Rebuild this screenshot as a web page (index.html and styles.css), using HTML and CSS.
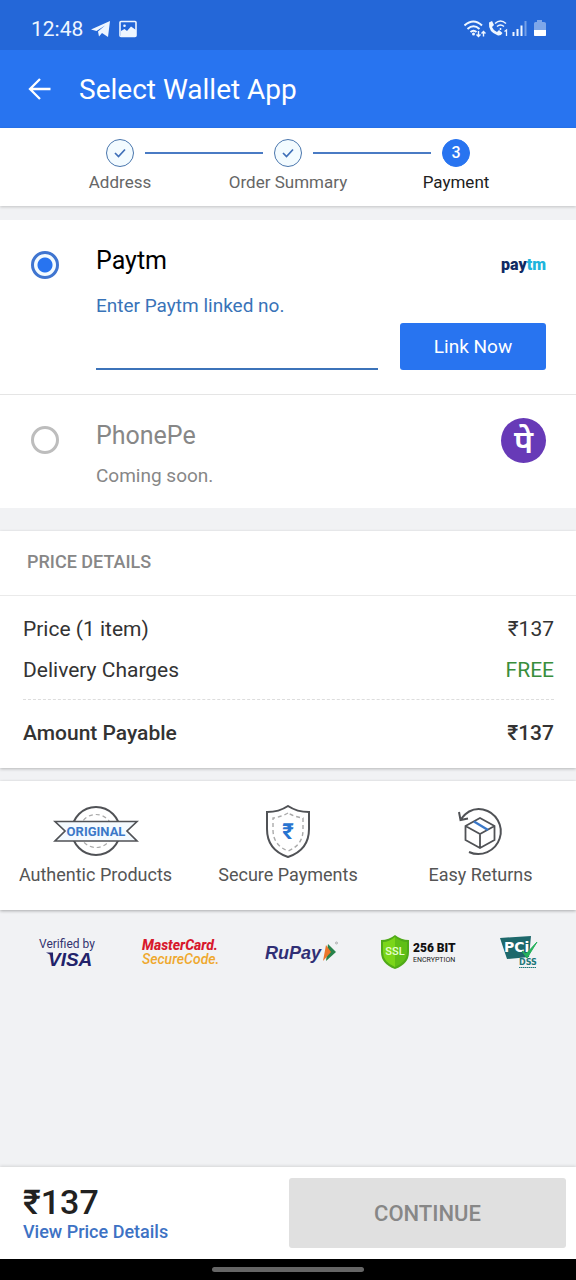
FILE: index.html
```html
<!DOCTYPE html>
<html lang="en">
<head>
    <meta charset="UTF-8">
    <meta name="viewport" content="width=device-width, initial-scale=1.0">
    <title>Select Wallet App</title>
    <link rel="stylesheet" href="styles.css">
</head>
<body>
    <div class="status-bar">
        <span class="status-time">12:48</span>
        <svg class="status-telegram" width="20" height="18" viewBox="0 0 20 18"><path d="M0 9.500 19 1 17 17 11 13 8 16.500 7 11.500 14 5.500 5.500 11Z" fill="#eef6ff"/></svg>
        <svg class="status-picture" width="18" height="18" viewBox="0 0 18 18"><rect x="1" y="1.500" width="16" height="15" rx="1" fill="none" stroke="#eef6ff" stroke-width="1.600"/><circle cx="5.500" cy="5.800" r="1.300" fill="#eef6ff"/><path d="M2 11 5.500 9 8 11 12 6.500 17 10V16H2Z" fill="#eef6ff"/></svg>
        <svg class="status-signals" width="84" height="22" viewBox="0 0 84 22" fill="none" stroke="#eef6ff" stroke-width="2">
            <path d="M.5 7.500Q9.500-.5 18 7.500M3.500 11Q9.500 5.500 15.500 11M6.500 14Q9.500 11.500 12.500 14"/>
            <circle cx="9.500" cy="16" r="1.500" fill="#eef6ff" stroke="none"/>
            <path d="M14.500 13v5M12.500 16.500l2 2 2-2M19.500 18.500v-5M17.500 15.500l2-2 2 2" stroke-width="1.400"/>
            <path d="M25 4.500 28 3 30 7 28 9Q29 12 33 14L35 12 38.500 15Q37 18 34 17.500 24 14 25 4.500Z" fill="#eef6ff" stroke="none"/>
            <path d="M31 5.500Q36.500.5 42 5.500M33 8.500Q36.500 5.500 40 8.500M36.500 10v2" stroke-width="1.500"/>
            <path d="M40.500 13.500 42.500 12V18" stroke-width="1.300"/>
            <path d="M49.500 18v-4M53.500 18v-7M57.500 18V7.500"/>
            <path d="M61.500 18V3" opacity=".4"/>
            <path d="M70 18V5.500Q70 4 71.500 4H73V2H78V4H80Q82 4 82 5.500V18Z" fill="#eef6ff" stroke="none" opacity=".45"/>
            <path d="M70 12H82V17Q82 18 81 18H71Q70 18 70 17Z" fill="#fff" stroke="none"/>
        </svg>
    </div>

    <header class="app-bar">
        <button class="back-button" type="button" aria-label="Back">
            <svg width="24" height="24" viewBox="0 0 24 24" fill="none" stroke="#fff" stroke-width="2.300"><path d="M22.500 12H2M12 2 2 12 12 22"/></svg>
        </button>
        <h1 class="app-title">Select Wallet App</h1>
    </header>

    <ol class="stepper">
        <li class="step">
            <div class="step-track">
                <span class="step-circle"><svg width="14" height="12" viewBox="0 0 14 12"><path d="M2 6 5.500 9.500 12 2.500" fill="none" stroke="#3f6fb8" stroke-width="1.700"/></svg></span>
            </div>
            Address
        </li>
        <li class="step">
            <div class="step-track">
                <span class="step-circle"><svg width="14" height="12" viewBox="0 0 14 12"><path d="M2 6 5.500 9.500 12 2.500" fill="none" stroke="#3f6fb8" stroke-width="1.700"/></svg></span>
            </div>
            Order Summary
        </li>
        <li class="step step-current">
            <div class="step-track"><span class="step-circle">3</span></div>
            Payment
        </li>
    </ol>

    <main class="content">
        <form class="wallets">
            <div class="wallet">
                <input class="wallet-radio" type="radio" name="wallet" id="paytm" checked>
                <div class="wallet-body">
                    <div class="wallet-head">
                        <label class="wallet-name" for="paytm">Paytm</label>
                        <span class="paytm-logo">pay<span class="paytm-logo-tm">tm</span></span>
                    </div>
                    <label class="phone-label" for="phone">Enter Paytm linked no.</label>
                    <div class="link-row">
                        <input class="phone-input" type="tel" id="phone">
                        <button class="link-button" type="button">Link Now</button>
                    </div>
                </div>
            </div>
            <div class="wallet wallet-disabled">
                <input class="wallet-radio" type="radio" name="wallet" id="phonepe" disabled>
                <div class="wallet-body">
                    <div class="wallet-head">
                        <label class="wallet-name" for="phonepe">PhonePe</label>
                        <span class="phonepe-logo">पे</span>
                    </div>
                    <p class="wallet-note">Coming soon.</p>
                </div>
            </div>
        </form>

        <section class="price-card">
            <h2 class="price-title">PRICE DETAILS</h2>
            <dl class="price-list">
                <div class="price-row"><dt>Price (1 item)</dt><dd>₹137</dd></div>
                <div class="price-row"><dt>Delivery Charges</dt><dd class="free">FREE</dd></div>
                <div class="price-row price-total"><dt>Amount Payable</dt><dd>₹137</dd></div>
            </dl>
        </section>

        <section class="trust">
            <div class="trust-item">
                <svg width="86" height="54" viewBox="0 0 86 54" fill="none" stroke="#505256" stroke-width="2">
                    <circle cx="43" cy="26" r="24"/>
                    <circle cx="43" cy="26" r="16.500" stroke="#aaa" stroke-width="1.200" stroke-dasharray="4 3"/>
                    <path d="M2 16.500H84L74 26 84 36H2L12 26Z" fill="#f4faff" stroke-width="1.700"/>
                    <text x="43" y="31" class="original-text">ORIGINAL</text>
                </svg>
                Authentic Products
            </div>
            <div class="trust-item">
                <svg width="48" height="54" viewBox="0 0 48 54" fill="none" stroke="#505256" stroke-width="2">
                    <path d="M24 1Q15 7 3 7V24Q3 45 24 52 45 45 45 24V7Q33 7 24 1Z"/>
                    <path d="M24 8Q17 12 9 13V25Q9 40 24 46 39 40 39 25V13Q31 12 24 8Z" stroke="#aaa" stroke-width="1.400" stroke-dasharray="4 3"/>
                    <text x="24" y="34" class="shield-rupee">₹</text>
                </svg>
                Secure Payments
            </div>
            <div class="trust-item">
                <svg width="48" height="54" viewBox="0 0 48 54" fill="none" stroke="#505256" stroke-width="2">
                    <path d="M4 14Q13 2 26 4.500A22.500 22.500 0 1 1 12 47M2 7 3.500 15 11 13.500"/>
                    <path d="M23 13 37.500 21V35L23 43 8.500 35V21ZM8.500 21 23 29 37.500 21M23 29V43" stroke-width="1.800"/>
                    <path d="M17 16.500 31 25" stroke="#3b78c8" stroke-width="2.400"/>
                </svg>
                Easy Returns
            </div>
        </section>

        <div class="badges">
            <svg width="60" height="36" viewBox="0 0 60 36">
                <text x="1" y="13" class="visa-small">Verified by</text>
                <text x="10" y="31" class="visa">VISA</text>
                <path d="M8 17.500H15V22Q12 19 8 17.500Z" fill="#22226a"/>
            </svg>
            <svg width="80" height="36" viewBox="0 0 80 36">
                <text x="1" y="15" class="mastercard">MasterCard.</text>
                <text x="1" y="29" class="securecode">SecureCode.</text>
            </svg>
            <svg width="74" height="36" viewBox="0 0 74 36">
                <text x="1" y="24" class="rupay">RuPay</text>
                <path d="M64 9 72 17 62 26Z" fill="#27824a"/><path d="M62 10 67 17 59 26Z" fill="#ec762b"/>
                <circle cx="72.500" cy="8" r="1" fill="none" stroke="#888" stroke-width=".6"/>
            </svg>
            <svg width="76" height="36" viewBox="0 0 76 36">
                <path d="M14 0Q8 5 0 5V17Q0 29 14 34 28 29 28 17V5Q20 5 14 0Z" fill="#50aa18"/>
                <path d="M14 2Q8 7 2 7V17Q2 27 14 32Z" fill="#7bd61a"/><path d="M14 2Q20 7 26 7V17Q26 27 14 32Z" fill="#60bf16"/>
                <text x="14" y="20" class="ssl">SSL</text>
                <text x="32" y="17" class="ssl-bits">256 BIT</text>
                <text x="32" y="27" class="ssl-note">ENCRYPTION</text>
            </svg>
            <svg width="38" height="36" viewBox="0 0 38 36">
                <path d="M0 3 31 1 29 22 7 24Z" fill="#1d686b"/>
                <text x="4" y="17" class="pci">PCi</text>
                <path d="M22 16 26 19 37 7 27 23Z" fill="#24b15b" stroke="#24b15b"/>
                <text x="19" y="30" class="dss">DSS</text>
                <path d="M19 32.500H36" stroke="#1d7778" stroke-width="1.200" stroke-dasharray="1.500 .5"/>
            </svg>
        </div>
    </main>

    <footer class="checkout-bar">
        <div class="checkout-total">
            <strong class="checkout-price">₹137</strong>
            <a class="checkout-link" href="#">View Price Details</a>
        </div>
        <button class="continue-button" type="button" disabled>CONTINUE</button>
    </footer>
    <div class="nav-bar"><span class="nav-handle"></span></div>
</body>
</html>
```

FILE: styles.css
```css
* {
    box-sizing: border-box;
}

body {
    margin: 0;
    min-height: 100vh;
    display: flex;
    flex-direction: column;
    font-family: Roboto, "Noto Sans", sans-serif;
    background: #f1f2f4;
    color: #333;
}

h1, h2, p, ol, dl, dd {
    margin: 0;
    padding: 0;
}

svg {
    display: block;
    flex-shrink: 0;
}

button, input {
    font-family: inherit;
}

/* top bars */
.status-bar {
    height: 50px;
    padding: 8px 28px 0 31px;
    display: flex;
    align-items: center;
    gap: 8px;
    background: #2467d8;
    color: #eef6ff;
}

.status-time {
    font-size: 21px;
}

.status-signals {
    margin-left: auto;
}

.app-bar {
    height: 78px;
    padding: 0 28px;
    display: flex;
    align-items: center;
    gap: 27px;
    background: #2874f0;
    color: #fff;
}

.back-button {
    padding: 0;
    border: 0;
    background: none;
}

.app-title {
    font-size: 28px;
    font-weight: 400;
}

/* steps */
.stepper {
    height: 78px;
    padding: 11px 36px 0;
    display: grid;
    grid-template-columns: repeat(3, 1fr);
    list-style: none;
    background: #fff;
    box-shadow: 0 1px 3px rgba(0, 0, 0, 0.2);
}

.step {
    text-align: center;
    font-size: 17px;
    line-height: 20px;
    color: #666;
}

.step-track {
    display: flex;
    align-items: center;
    gap: 11px;
    margin-bottom: 5px;
}

.step-track::before,
.step-track::after {
    content: "";
    flex: 1;
    height: 2px;
    background: #4a7bc4;
}

.step:first-child .step-track::before,
.step:last-child .step-track::after {
    background: none;
}

.step-circle {
    width: 28px;
    height: 28px;
    display: flex;
    align-items: center;
    justify-content: center;
    border: 1px solid #4a76ad;
    border-radius: 50%;
    background: #f3fbff;
}

.step-current {
    color: #212121;
}

.step-current .step-circle {
    border-color: #2874f0;
    background: #2874f0;
    color: #fff;
    font-size: 16px;
    font-weight: 500;
}

.content {
    flex: 1;
    padding-top: 14px;
}

/* wallets */
.wallets {
    background: #fff;
    margin-bottom: 23px;
}

.wallet {
    padding: 23px 30px 24px 31px;
    display: flex;
    gap: 37px;
}

.wallet-radio {
    appearance: none;
    flex-shrink: 0;
    width: 28px;
    height: 28px;
    margin: 8px 0 0;
    border: 3px solid #3f75d0;
    border-radius: 50%;
    background: radial-gradient(circle, #2874f0 7px, #f3fbff 8px);
}

.wallet-body {
    flex: 1;
}

.wallet-head {
    display: flex;
    justify-content: space-between;
    align-items: center;
    height: 44px;
    padding-bottom: 10px;
}

.wallet-name {
    font-size: 25px;
    color: #000;
}

.paytm-logo {
    margin-top: 10px;
    font-size: 16px;
    font-weight: 900;
    line-height: 18px;
    color: #102a63;
}

.paytm-logo-tm {
    color: #20b4dc;
}

.phone-label {
    display: block;
    margin-top: 8px;
    font-size: 19px;
    line-height: 22px;
    color: #3973b8;
}

.link-row {
    display: flex;
    align-items: flex-end;
    gap: 22px;
    margin-top: 6px;
}

.phone-input {
    flex: 1;
    min-width: 0;
    height: 40px;
    padding: 0;
    border: 0;
    border-bottom: 2px solid #3c73b9;
    outline: 0;
    font-size: 19px;
    background: none;
}

.link-button {
    width: 146px;
    height: 47px;
    border: 0;
    border-radius: 3px;
    background: #2874f0;
    color: #fff;
    font-size: 19px;
}

.wallet-disabled {
    border-top: 1px solid #e5e5e5;
    padding-bottom: 20px;
}

.wallet-disabled .wallet-radio {
    border-color: #bdbdbd;
    background: #fff;
}

.wallet-disabled .wallet-name,
.wallet-note {
    color: #878787;
}

.phonepe-logo {
    width: 45px;
    height: 45px;
    margin-top: 10px;
    border-radius: 50%;
    background: #673ab7;
    color: #fff;
    font-size: 32px;
    font-weight: 600;
    line-height: 48px;
    text-align: center;
}

.wallet-note {
    margin-top: 2px;
    font-size: 19px;
    line-height: 24px;
}

/* price */
.price-card {
    margin-bottom: 13px;
    background: #fff;
    box-shadow: 0 1px 3px rgba(0, 0, 0, 0.25);
}

.price-title {
    padding: 0 27px;
    border-bottom: 1px solid #eaeaea;
    font-size: 18px;
    font-weight: 500;
    line-height: 62px;
    height: 65px;
    color: #878787;
}

.price-list {
    padding: 13px 22px 14px 23px;
    font-size: 21px;
}

.price-row {
    display: flex;
    justify-content: space-between;
    line-height: 41px;
}

.free {
    color: #388e3c;
}

.price-total {
    margin-top: 8px;
    padding-top: 13px;
    border-top: 1px dashed #ddd;
    font-weight: 500;
}

/* trust */
.trust {
    padding: 24px 11px 24px;
    display: grid;
    grid-template-columns: 169px 1fr 169px;
    background: #fff;
    box-shadow: 0 1px 3px rgba(0, 0, 0, 0.3);
}

.trust-item {
    display: flex;
    flex-direction: column;
    align-items: center;
    gap: 5px;
    font-size: 18px;
    line-height: 22px;
    color: #555;
}

.original-text {
    fill: #3b78c8;
    stroke: none;
    font-size: 13px;
    font-weight: 700;
    text-anchor: middle;
}

.shield-rupee {
    fill: #2874d0;
    stroke: none;
    font-size: 22px;
    font-weight: 700;
    text-anchor: middle;
}

.badges {
    padding: 25px 38px 0;
    display: flex;
    justify-content: space-between;
}

.visa-small {
    fill: #33336f;
    font-size: 12px;
}

.visa {
    fill: #22226a;
    font-family: "Liberation Sans", sans-serif;
    font-size: 19px;
    font-style: italic;
    font-weight: 700;
}

.mastercard,
.securecode {
    fill: #d8182c;
    font-size: 14px;
    font-style: italic;
    font-weight: 800;
}

.securecode {
    fill: #efa82d;
    font-weight: 500;
}

.rupay {
    fill: #302f75;
    font-family: "Liberation Sans", sans-serif;
    font-size: 18px;
    font-style: italic;
    font-weight: 700;
}

.ssl {
    fill: #e7ffd0;
    font-size: 11px;
    font-weight: 500;
    text-anchor: middle;
}

.ssl-bits {
    fill: #111;
    font-size: 12px;
    font-weight: 900;
}

.ssl-note {
    fill: #222;
    font-size: 7px;
}

.pci {
    fill: #fff;
    font-family: "DejaVu Sans", sans-serif;
    font-size: 14px;
    font-weight: 700;
}

.dss {
    fill: #1d7778;
    font-family: "DejaVu Sans", sans-serif;
    font-size: 8px;
    font-weight: 700;
}

/* bottom */
.checkout-bar {
    min-height: 92px;
    padding: 11px 10px 11px 23px;
    display: flex;
    align-items: center;
    background: #fff;
    box-shadow: 0 -1px 3px rgba(0, 0, 0, 0.12);
}

.checkout-total {
    flex: 1;
}

.checkout-price {
    display: block;
    font-size: 34px;
    font-weight: 500;
    line-height: 38px;
    color: #212121;
}

.checkout-link {
    font-size: 18px;
    font-weight: 500;
    line-height: 22px;
    color: #3d72c4;
    text-decoration: none;
}

.continue-button {
    width: 277px;
    height: 70px;
    border: 0;
    border-radius: 3px;
    background: #e0e0e0;
    color: #878787;
    font-size: 22px;
    font-weight: 500;
}

.nav-bar {
    height: 21px;
    display: flex;
    align-items: center;
    justify-content: center;
    background: #000;
}

.nav-handle {
    width: 152px;
    height: 5px;
    border-radius: 3px;
    background: #666;
}
```
